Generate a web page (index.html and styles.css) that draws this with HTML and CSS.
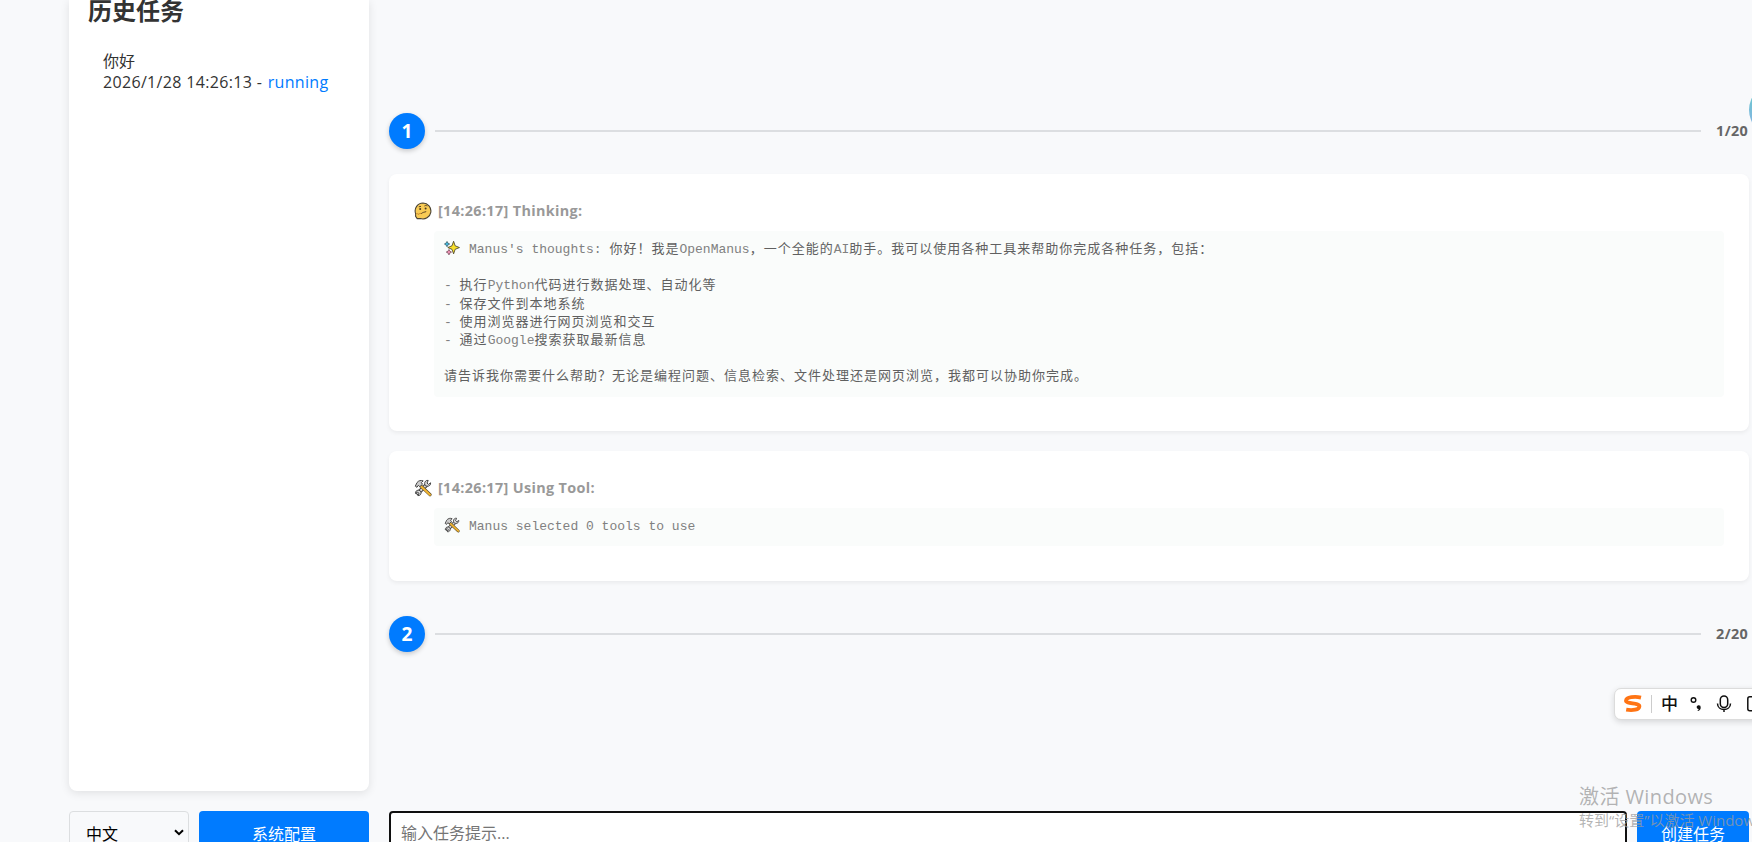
FILE: index.html
```html
<!DOCTYPE html>
<html lang="zh-CN">
<head>
    <meta charset="UTF-8">
    <meta name="viewport" content="width=device-width, initial-scale=1.0">
    <title>OpenManus</title>
    <link rel="stylesheet" href="styles.css">
</head>
<body>
    <!-- shared icons -->
    <svg class="sprite" width="0" height="0">
        <symbol id="icon-thinking" viewBox="0 0 18 18">
            <path d="M9 1a8 8 0 1 1-2.600 15.600H3.200L1.600 14.400V11.600A8 8 0 0 1 9 1z" fill="#f8cb55" stroke="#4a4334" stroke-width="1.100"/>
            <path d="M2 12.200c.8-1.300 1.600-.8 2 .2 1.200-.8 2.600-1.200 4-1.100" fill="none" stroke="#c98a2e" stroke-width="1"/>
            <circle cx="6.200" cy="7" r="1" fill="#4a3a22"/>
            <circle cx="11.600" cy="6.600" r="1" fill="#4a3a22"/>
            <path d="M4.800 4.800l2.200-.4M10.400 4c1-.7 2-.6 2.900 0M7.400 11.600c1.600-1.600 3-1.300 4.800-2" fill="none" stroke="#5a4425" stroke-width="1"/>
        </symbol>
        <symbol id="icon-tools" viewBox="0 0 18 18">
            <path d="M4 14L12.200 6.200" stroke="#444" stroke-width="4" stroke-linecap="round"/>
            <path d="M4 14L12.200 6.200" stroke="#ddd" stroke-width="2" stroke-linecap="round"/>
            <path d="M14.200 1.400c-2-.4-3.800 1.200-3.500 3.400l.4 1.800 1.900.6c2.200.3 3.900-1.300 3.600-3.400L14.500 5.400l-1.500-1.300z" fill="#ddd" stroke="#444" stroke-width="1"/>
            <path d="M3.800 16.600c2 .3 3.500-1.300 3.200-3.300l-.7-1.500-1.700-.6c-2 0-3.500 1.400-3.100 3.300L3.600 13l1.300 1.300z" fill="#ddd" stroke="#444" stroke-width="1"/>
            <path d="M7 7.200l9 8.500" stroke="#5b4a28" stroke-width="3.200" stroke-linecap="round"/>
            <path d="M7.200 7.400l8.800 8.300" stroke="#f2b632" stroke-width="2" stroke-linecap="round"/>
            <path d="M1.300 7.200L3 3.600C4.600 1.500 7 1 9.200 1.900L7.300 3.600l1.200 1.600-2.700 2.500-1.500-1.400-1.300 2z" fill="#ccc" stroke="#444" stroke-width="1"/>
        </symbol>
        <symbol id="icon-sparkles" viewBox="0 0 18 18">
            <path d="M10.800 1.400l1.700 5.100 4.900 2-4.900 2-1.700 5.100-1.800-5.100-4.700-2 4.700-2z" fill="#f8df2b" stroke="#514b2c" stroke-width="1"/>
            <path d="M3.400 1.600l1 1.900 2 1-2 1.100-1 2-1.100-2-1.800-1.100 1.800-1z" fill="#43b7dc" stroke="#355660" stroke-width=".8"/>
            <path d="M5.600 10.600l1 2 1.900 1-1.900 1-1 2.200-1.100-2.200-2-1 2-1z" fill="#f092b4" stroke="#714354" stroke-width=".8"/>
        </symbol>
    </svg>

    <div class="container">
        <aside class="sidebar">
            <div class="history-panel">
                <h2>历史任务</h2>
                <div class="task-card">
                    <div>你好</div>
                    <div class="task-meta">2026/1/28 14:26:13 - <span class="status-running">running</span></div>
                </div>
            </div>
            <div class="sidebar-footer">
                <div class="language-select">
                    <span>中文</span>
                    <svg width="10" height="7" viewBox="0 0 10 7"><path d="M1 1.200l4 4 4-4" fill="none" stroke="#000" stroke-width="2"/></svg>
                </div>
                <button class="btn config-btn">系统配置</button>
            </div>
        </aside>

        <main class="main-panel">
            <div class="task-container">
                <div class="step-header">
                    <span class="step-number">1</span>
                    <span class="step-line"></span>
                    <span class="step-count">1/20</span>
                </div>
                <section class="step-item">
                    <div class="log-line">
                        <svg class="log-icon"><use href="#icon-thinking"/></svg>
                        <span>[14:26:17] Thinking:</span>
                    </div>
                    <pre><svg class="pre-icon"><use href="#icon-sparkles"/></svg>Manus's thoughts: <b>你好！我是</b>OpenManus<b>，一个全能的</b>AI<b>助手。我可以使用各种工具来帮助你完成各种任务，包括：</b>

- <b>执行</b>Python<b>代码进行数据处理、自动化等</b>
- <b>保存文件到本地系统</b>
- <b>使用浏览器进行网页浏览和交互</b>
- <b>通过</b>Google<b>搜索获取最新信息</b>

<b>请告诉我你需要什么帮助？无论是编程问题、信息检索、文件处理还是网页浏览，我都可以协助你完成。</b></pre>
                </section>
                <section class="step-item">
                    <div class="log-line">
                        <svg class="log-icon"><use href="#icon-tools"/></svg>
                        <span>[14:26:17] Using Tool:</span>
                    </div>
                    <pre><svg class="pre-icon"><use href="#icon-tools"/></svg>Manus selected 0 tools to use</pre>
                </section>
                <div class="step-header second">
                    <span class="step-number">2</span>
                    <span class="step-line"></span>
                    <span class="step-count">2/20</span>
                </div>
            </div>
            <div class="input-container">
                <input type="text" class="prompt-input" placeholder="输入任务提示...">
                <button class="btn create-btn">创建任务</button>
            </div>
        </main>
    </div>

    <div class="float-ball"></div>

    <div class="ime-bar">
        <svg class="ime-logo" width="20" height="18" viewBox="0 0 20 18"><path d="M18 2.600C12 1.200 3.300 2 3 5.600c-.3 3.600 13.600 1.800 13.400 5.700-.2 3.500-6.800 4.500-13.200 3.400" fill="none" stroke="#ff7414" stroke-width="3.800"/></svg>
        <span class="ime-divider"></span>
        <span class="ime-lang">中</span>
        <svg class="ime-punct" width="12" height="16" viewBox="0 0 12 16"><circle cx="3.500" cy="4" r="2.300" fill="none" stroke="#111" stroke-width="1.400"/><path d="M8.300 9.200a2.200 2.200 0 0 1 2.400 2.400c0 1.700-.9 2.900-2.700 3.500l-.5-.8c.8-.4 1.200-.8 1.300-1.300a1.900 1.900 0 1 1-.5-3.800z" fill="#111"/></svg>
        <svg class="ime-mic" width="16" height="18" viewBox="0 0 16 18"><rect x="4.300" y="1" width="7.400" height="11.500" rx="3.700" fill="none" stroke="#111" stroke-width="1.500"/><path d="M1.500 8.500c0 8 13 8 13 0M8 14.500V17" fill="none" stroke="#111" stroke-width="1.500"/></svg>
        <svg class="ime-keyboard" width="20" height="16" viewBox="0 0 20 16"><rect x=".8" y=".8" width="18" height="14" rx="2" fill="none" stroke="#111" stroke-width="1.500"/></svg>
    </div>

    <div class="watermark">
        <div class="watermark-title">激活 Windows</div>
        <div class="watermark-text">转到“设置”以激活 Windows。</div>
    </div>
</body>
</html>
```
FILE: styles.css
```css
* {
    box-sizing: border-box;
}
body {
    margin: 0;
    height: 842px;
    overflow: hidden;
    position: relative;
    background-color: #f8f9fb;
    color: #333;
    font-family: "Open Sans", "Noto Sans CJK SC", sans-serif;
    font-size: 16px;
}
.sprite {
    position: absolute;
}
.container {
    display: flex;
    gap: 20px;
    width: 1749px;
    padding-left: 69px;
}

/* history sidebar */
.sidebar {
    flex: 0 0 300px;
    display: flex;
    flex-direction: column;
    gap: 20px;
}
.history-panel {
    height: 791px;
    padding: 0 20px 0 19px;
    background-color: #fff;
    border-radius: 0 0 8px 8px;
    box-shadow: 0 2px 10px rgba(0, 0, 0, 0.1);
}
.history-panel h2 {
    margin: -4px 0 0;
    font-size: 24px;
    line-height: 30px;
}
.task-card {
    padding: 25px 15px;
    line-height: 21px;
}
.task-meta {
    white-space: nowrap;
    letter-spacing: 0.33px;
}
.status-running {
    margin-left: 1px;
    color: #007bff;
}
.sidebar-footer {
    display: flex;
    gap: 10px;
    height: 46px;
}
.language-select {
    display: flex;
    align-items: center;
    justify-content: space-between;
    width: 120px;
    height: 43px;
    padding: 0 4px 0 16px;
    border: 1px solid #dcdee0;
    border-radius: 4px;
    color: #000;
}
.btn {
    height: 46px;
    padding: 0 0 2px;
    border: 0;
    border-radius: 4px;
    background-color: #007bff;
    color: #fff;
    font-family: inherit;
    font-size: 16px;
}
.config-btn {
    flex: 1;
}

/* steps */
.main-panel {
    flex: 1;
    min-width: 0;
}
.task-container {
    height: 811px;
    padding-top: 113px;
}
.step-header {
    display: flex;
    align-items: center;
    height: 36px;
    margin-bottom: 25px;
}
.step-header.second {
    margin-top: 35px;
}
.step-number {
    width: 36px;
    height: 36px;
    border-radius: 50%;
    background-color: #007bff;
    color: #fff;
    font-size: 19.2px;
    font-weight: bold;
    line-height: 36px;
    text-align: center;
    box-shadow: 0 2px 5px rgba(0, 0, 0, 0.2);
}
.step-line {
    flex: 1;
    height: 2px;
    margin: 0 15px 0 10px;
    background-color: #dcdee1;
}
.step-count {
    width: 33px;
    padding-bottom: 2px;
    color: #666;
    font-size: 14.4px;
    font-weight: bold;
    letter-spacing: 0.4px;
    white-space: nowrap;
}
.step-item {
    margin-bottom: 20px;
    padding: 25px 25px 34.6px;
    background-color: #fff;
    border-radius: 8px;
    box-shadow: 0 2px 4px rgba(0, 0, 0, 0.06);
}
.log-line {
    display: flex;
    align-items: center;
    height: 24px;
    color: #999;
    font-size: 14.4px;
    font-weight: bold;
    letter-spacing: 0.35px;
}
.log-line span {
    padding-bottom: 2px;
}
.log-icon {
    width: 18px;
    height: 18px;
    margin: 0 6px 0 0;
}
pre {
    margin: 8px 0 0 20px;
    padding: 10px;
    border-radius: 4px;
    background-color: #fafcfb;
    color: #808080;
    font-family: "Courier New", "Liberation Mono", "Noto Sans CJK SC", monospace;
    font-size: 13px;
    line-height: 18.2px;
}
pre b {
    color: #606060;
    font-weight: normal;
    letter-spacing: 1px;
}
.pre-icon {
    width: 16px;
    height: 16px;
    margin: -1px 9px -3px 0;
}

/* prompt row */
.input-container {
    display: flex;
    gap: 10px;
}
.prompt-input {
    flex: 1;
    height: 46px;
    padding: 0 10px 2px;
    border: 2px solid #101010;
    border-radius: 4px;
    background-color: #fff;
    font-family: inherit;
    font-size: 16px;
}
.prompt-input::placeholder {
    color: #757575;
}
.create-btn {
    width: 112px;
}

/* desktop overlays */
.float-ball {
    position: absolute;
    top: 84px;
    left: 1749px;
    width: 52px;
    height: 52px;
    border-radius: 50%;
    background: linear-gradient(#62cbc8, #8fb0ea);
}
.ime-bar {
    position: absolute;
    top: 688px;
    left: 1614px;
    display: flex;
    align-items: center;
    width: 200px;
    height: 32px;
    padding-left: 8px;
    border: 1px solid #dcdcdc;
    border-radius: 7px;
    background-color: #fff;
    box-shadow: 0 2px 6px rgba(0, 0, 0, 0.14);
}
.ime-divider {
    width: 1px;
    height: 18px;
    margin: 0 9px 0 8px;
    background-color: #ccc;
}
.ime-lang {
    width: 18px;
    color: #111;
    font-size: 17px;
    font-weight: 500;
    line-height: 30px;
}
.ime-punct {
    margin-left: 11px;
}
.ime-mic {
    margin-left: 14px;
}
.ime-keyboard {
    margin-left: 15px;
}
.watermark {
    position: absolute;
    top: 783px;
    left: 1579px;
    color: rgba(155, 155, 155, 0.75);
    white-space: nowrap;
}
.watermark-title {
    font-size: 20px;
    line-height: 28px;
    letter-spacing: 0.4px;
}
.watermark-text {
    font-size: 15px;
    line-height: 18px;
}
```
